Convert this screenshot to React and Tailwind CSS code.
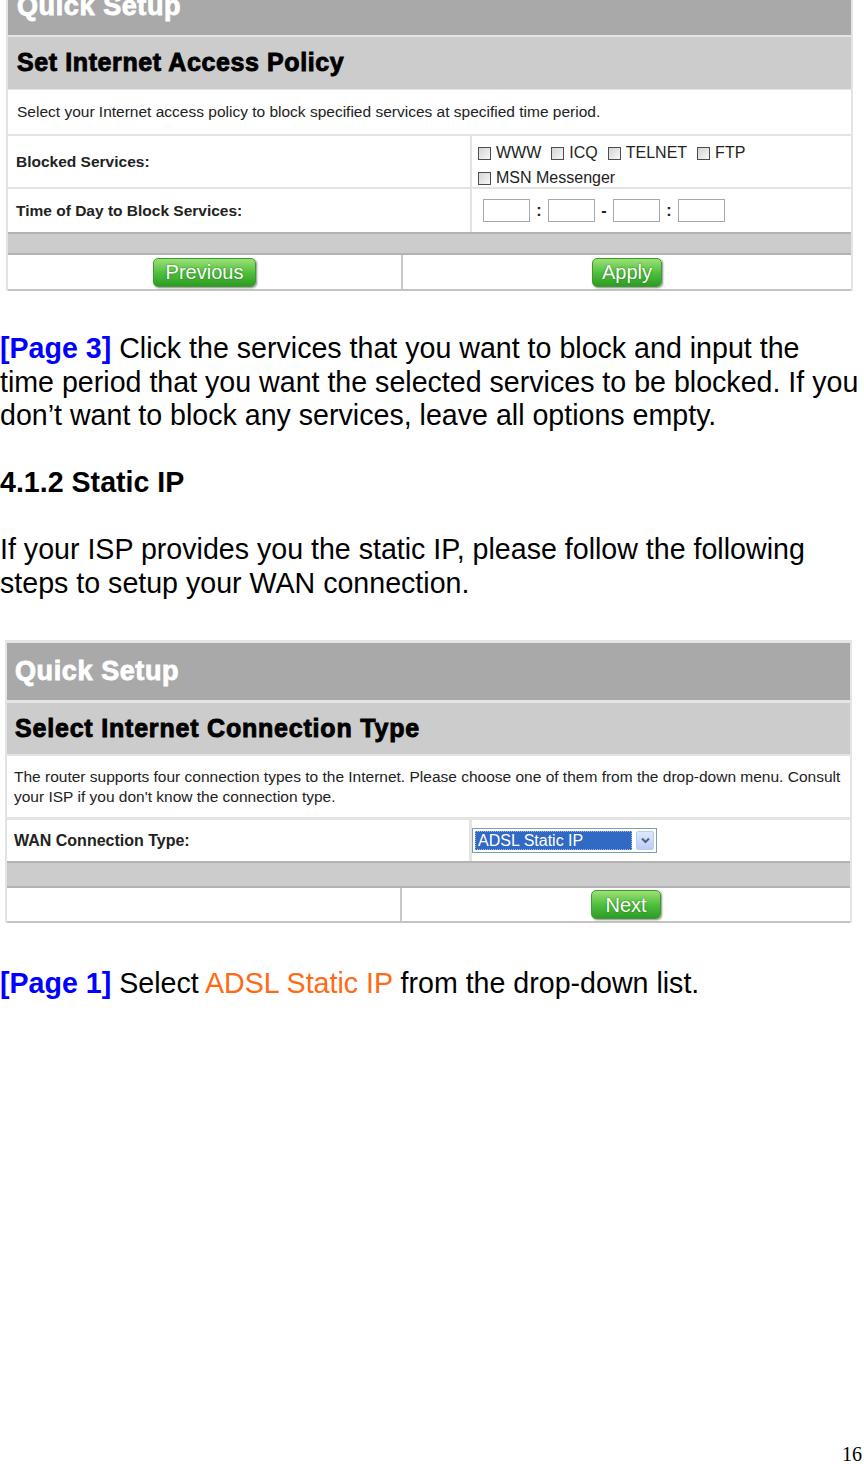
import React from "react";

const sans = "font-['Liberation_Sans',Arial,sans-serif]";

function GreenButton({ children, w }) {
  return (
    <div
      className={`${w} h-[29px] rounded-[5px] border border-[#3f9a32] bg-linear-to-b from-[#9be077] via-[#4fc13c] to-[#2c9d24] shadow-[1px_1px_2px_rgba(0,0,0,0.45)] flex items-center justify-center text-white text-[20px] leading-none [text-shadow:0_0_2px_rgba(0,60,0,0.6)] ${sans}`}
    >
      {children}
    </div>
  );
}

function Check({ label }) {
  return (
    <div className="flex items-center gap-[5px]">
      <div className="w-[13px] h-[13px] border border-[#4d4d4d] bg-linear-to-br from-[#d4d4d4] to-[#f8f8f8]" />
      <span className="text-[16px] leading-[20px] text-[#222]">{label}</span>
    </div>
  );
}

function TimeBox() {
  return <div className="w-[47px] h-[23px] border border-[#a2a9b1] bg-white" />;
}

function Sep({ ch }) {
  return <span className="w-[8px] text-center text-[16px] font-bold text-[#222]">{ch}</span>;
}

function ButtonRow({ left, right, h }) {
  return (
    <div className={`${h} bg-white flex border-b-2 border-[#c4c4c4]`}>
      <div className="w-[395px] border-r-2 border-[#c8c8c8] flex items-center justify-center">{left}</div>
      <div className="flex-1 flex items-center justify-center">{right}</div>
    </div>
  );
}

export default function App() {
  return (
    <div className={`min-h-[1464px] w-[864px] bg-white flex flex-col overflow-hidden ${sans}`}>
      {/* Screenshot 1 */}
      <div className="-mt-[22px] ml-[6px] w-[847px] bg-[#e4e4e4] px-[2px] flex flex-col">
        <div className="h-[57px] bg-[#a9a9a9] flex items-center pl-[9px]">
          <span className="text-white text-[27px] font-bold [-webkit-text-stroke:0.9px_white] tracking-[0.6px]">Quick Setup</span>
        </div>
        <div className="mt-[2px] h-[52px] bg-[#cccccc] flex items-center pl-[9px]">
          <span className="text-black text-[25px] font-bold [-webkit-text-stroke:0.9px_black] tracking-[0.6px]">Set Internet Access Policy</span>
        </div>
        <div className="mt-[1px] h-[44px] bg-white flex items-center pl-[9px]">
          <span className="text-[15.5px] text-[#222]">Select your Internet access policy to block specified services at specified time period.</span>
        </div>
        <div className="mt-[2px] h-[51px] flex gap-[2px]">
          <div className="w-[462px] bg-white flex items-center pl-[8px]">
            <span className="text-[15.5px] font-bold text-[#222]">Blocked Services:</span>
          </div>
          <div className="flex-1 bg-white flex flex-col pl-[6px] pt-[7px] gap-[5px]">
            <div className="flex items-center gap-[10px]">
              <Check label="WWW" />
              <Check label="ICQ" />
              <Check label="TELNET" />
              <Check label="FTP" />
            </div>
            <Check label="MSN Messenger" />
          </div>
        </div>
        <div className="mt-[2px] h-[43px] flex gap-[2px]">
          <div className="w-[462px] bg-white flex items-center pl-[8px]">
            <span className="text-[15.5px] font-bold text-[#222]">Time of Day to Block Services:</span>
          </div>
          <div className="flex-1 bg-white flex items-center pl-[11px] gap-[5px]">
            <TimeBox />
            <Sep ch=":" />
            <TimeBox />
            <Sep ch="-" />
            <TimeBox />
            <Sep ch=":" />
            <TimeBox />
          </div>
        </div>
        <div className="h-[23px] bg-[#cccccc] border-y-2 border-[#b3b3b3]" />
        <ButtonRow
          h="h-[36px]"
          left={<GreenButton w="w-[103px]">Previous</GreenButton>}
          right={<GreenButton w="w-[70px]">Apply</GreenButton>}
        />
      </div>

      {/* Paragraph */}
      <div className="mt-[41px] text-[28.6px] leading-[33.5px] text-black">
        <p className="whitespace-nowrap">
          <span className="text-[#0000ff] font-bold">[Page 3]</span> Click the services that you want to block and input the
          <br />
          time period that you want the selected services to be blocked. If you
          <br />
          don’t want to block any services, leave all options empty.
        </p>
        <p className="mt-[33.5px] font-bold">4.1.2 Static IP</p>
        <p className="mt-[33.5px]">
          If your ISP provides you the static IP, please follow the following
          <br />
          steps to setup your WAN connection.
        </p>
      </div>

      {/* Screenshot 2 */}
      <div className="mt-[40px] ml-[5px] w-[847px] bg-[#e4e4e4] px-[2px] pt-[3px] flex flex-col">
        <div className="h-[57px] bg-[#a9a9a9] flex items-center pl-[8px]">
          <span className="text-white text-[27px] font-bold [-webkit-text-stroke:0.9px_white] tracking-[0.6px]">Quick Setup</span>
        </div>
        <div className="mt-[3px] h-[51px] bg-[#cccccc] flex items-center pl-[8px]">
          <span className="text-black text-[25px] font-bold [-webkit-text-stroke:0.9px_black] tracking-[0.8px]">Select Internet Connection Type</span>
        </div>
        <div className="mt-[2px] h-[61px] bg-white flex items-center pl-[7px] pr-[4px]">
          <span className="text-[15.5px] leading-[20px] text-[#222]">
            The router supports four connection types to the Internet. Please choose one of them from the drop-down menu. Consult your ISP if you don't know the connection type.
          </span>
        </div>
        <div className="mt-[3px] h-[41px] flex gap-[3px]">
          <div className="w-[462px] bg-white flex items-center pl-[7px]">
            <span className="text-[16px] font-bold text-[#222]">WAN Connection Type:</span>
          </div>
          <div className="flex-1 bg-white flex items-center">
            <div className="w-[185px] h-[25px] border border-[#7f9db9] bg-white flex items-center px-[2px] gap-[4px]">
              <div className="w-[158px] h-[19px] bg-[#316ac5] border border-dotted border-[#9fb8e6] flex items-center pl-[2px] text-white text-[16px] leading-none">
                ADSL Static IP
              </div>
              <div className="w-[18px] h-[19px] rounded-[2px] border border-[#b8cdf5] bg-linear-to-b from-[#dfe9fd] to-[#b9cdf7] flex items-center justify-center">
                <svg width="9" height="7" viewBox="0 0 9 7">
                  <path d="M1 1.5 L4.5 5 L8 1.5" fill="none" stroke="#4d6185" strokeWidth="2" />
                </svg>
              </div>
            </div>
          </div>
        </div>
        <div className="h-[27px] bg-[#cccccc] border-y-2 border-[#b3b3b3]" />
        <ButtonRow
          h="h-[35px]"
          left={null}
          right={<GreenButton w="w-[70px]">Next</GreenButton>}
        />
      </div>

      <p className="mt-[44px] text-[28.6px] leading-[33.5px] text-black">
        <span className="text-[#0000ff] font-bold">[Page 1]</span> Select <span className="text-[#ff6a13]">ADSL Static IP</span> from the drop-down list.
      </p>

      <div className="mt-auto mb-[-2px] flex justify-end pr-[2px]">
        <span className="font-['Liberation_Serif',serif] text-[20px] leading-[24px] text-black">16</span>
      </div>
    </div>
  );
}
